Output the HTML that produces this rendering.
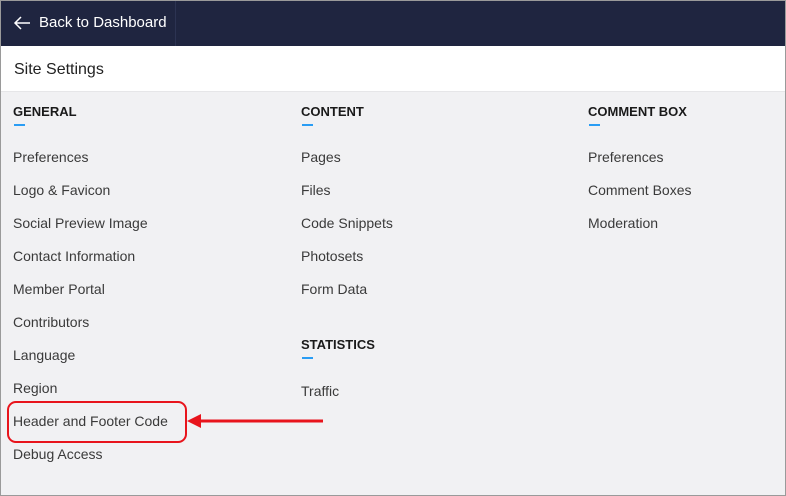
<!DOCTYPE html>
<html><head><style>
body{margin:0;width:786px;height:496px;overflow:hidden;font-family:"Liberation Sans",sans-serif;}
.frame{position:absolute;left:0;top:0;width:784px;height:494px;border:1px solid #9a9a9a;background:#f1f1f3;overflow:hidden}
.top{position:absolute;left:0;top:0;width:784px;height:45px;background:#1f2540}
.top .sep{position:absolute;left:174px;top:0;width:1px;height:45px;background:#2c3352}
.top .t{position:absolute;left:38px;top:13px;color:#fff;font-size:15px}
.bar{position:absolute;left:0;top:45px;width:784px;height:45px;background:#fff;border-bottom:1px solid #e6e6e8}
.bar span{position:absolute;left:13px;top:15px;font-size:16px;color:#222}
.h{position:absolute;font-size:13px;font-weight:bold;color:#1a1a1a;white-space:nowrap}
.u{position:absolute;width:11px;height:2px;background:#2a9df4}
.i{position:absolute;font-size:14px;color:#3a3a3a;white-space:nowrap}
</style></head><body><div class="frame">
<div class="top"><div class="sep"></div>
<svg style="position:absolute;left:12px;top:14px" width="18" height="16"><path d="M17 8H2M8 2L2 8l6 6" stroke="#fff" stroke-width="1.5" fill="none"/></svg>
<span class="t">Back to Dashboard</span></div>
<div class="bar"><span>Site Settings</span></div>
<div class="h" style="left:12px;top:103px">GENERAL</div><div class="u" style="left:13px;top:123px"></div>
<div class="i" style="left:12px;top:148px">Preferences</div>
<div class="i" style="left:12px;top:181px">Logo &amp; Favicon</div>
<div class="i" style="left:12px;top:214px">Social Preview Image</div>
<div class="i" style="left:12px;top:247px">Contact Information</div>
<div class="i" style="left:12px;top:280px">Member Portal</div>
<div class="i" style="left:12px;top:313px">Contributors</div>
<div class="i" style="left:12px;top:346px">Language</div>
<div class="i" style="left:12px;top:379px">Region</div>
<div class="i" style="left:12px;top:412px">Header and Footer Code</div>
<div class="i" style="left:12px;top:445px">Debug Access</div>
<div class="h" style="left:300px;top:103px">CONTENT</div><div class="u" style="left:301px;top:123px"></div>
<div class="i" style="left:300px;top:148px">Pages</div>
<div class="i" style="left:300px;top:181px">Files</div>
<div class="i" style="left:300px;top:214px">Code Snippets</div>
<div class="i" style="left:300px;top:247px">Photosets</div>
<div class="i" style="left:300px;top:280px">Form Data</div>
<div class="h" style="left:300px;top:336px">STATISTICS</div><div class="u" style="left:301px;top:356px"></div>
<div class="i" style="left:300px;top:382px">Traffic</div>
<div class="h" style="left:587px;top:103px">COMMENT BOX</div><div class="u" style="left:588px;top:123px"></div>
<div class="i" style="left:587px;top:148px">Preferences</div>
<div class="i" style="left:587px;top:181px">Comment Boxes</div>
<div class="i" style="left:587px;top:214px">Moderation</div>
<div style="position:absolute;left:6px;top:400px;width:176px;height:38px;border:2px solid #e8141c;border-radius:9px"></div>
<svg style="position:absolute;left:180px;top:410px" width="150" height="22"><path d="M142 10H18" stroke="#e8141c" stroke-width="3"/><path d="M6 10L20 3v14z" fill="#e8141c"/></svg>
</div></body></html>
